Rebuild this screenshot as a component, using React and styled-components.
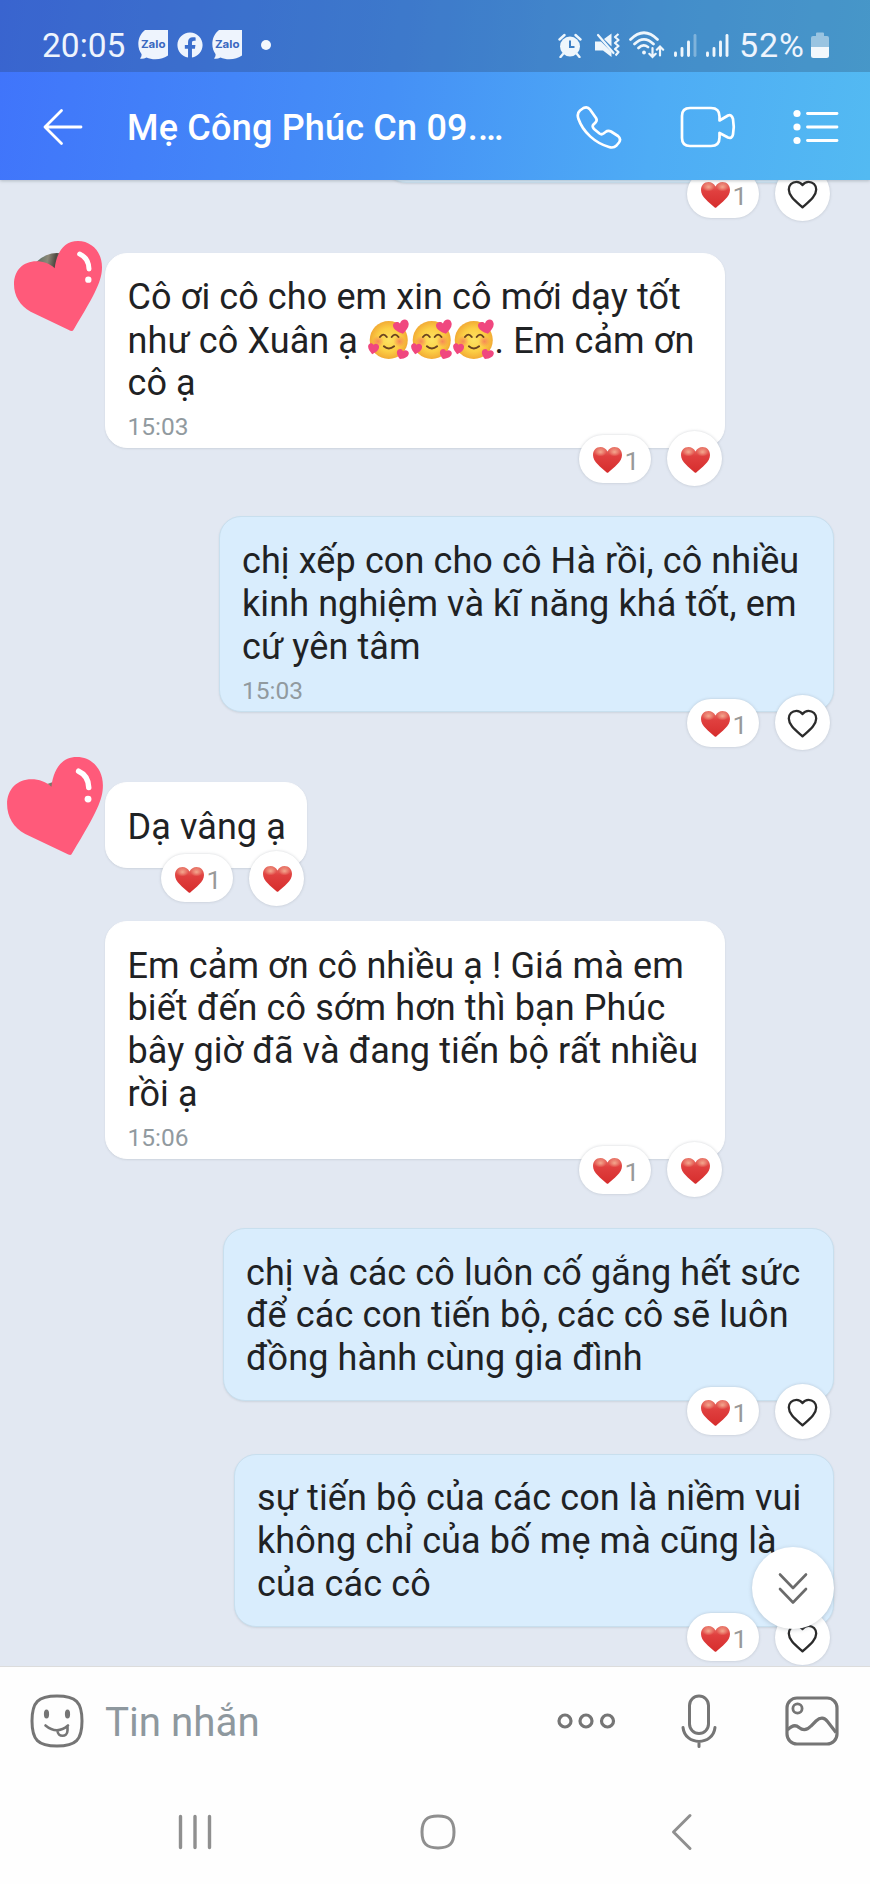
import styled, { createGlobalStyle } from 'styled-components';
import { FaFacebook } from 'react-icons/fa';

const messages = [
  { id: 1, mine: true, width: 450, lines: [] },
  {
    id: 2,
    width: 620,
    gap: 69.5,
    sticker: 'small',
    lines: ['Cô ơi cô cho em xin cô mới dạy tốt', 'như cô Xuân ạ 🥰🥰🥰. Em cảm ơn', 'cô ạ'],
    time: '15:03',
    reacted: true,
  },
  {
    id: 3,
    mine: true,
    width: 615,
    gap: 68,
    lines: ['chị xếp con cho cô Hà rồi, cô nhiều', 'kinh nghiệm và kĩ năng khá tốt, em', 'cứ yên tâm'],
    time: '15:03',
  },
  { id: 4, width: 202, gap: 69.5, sticker: 'large', lines: ['Dạ vâng ạ'], reacted: true },
  {
    id: 5,
    width: 620,
    gap: 53,
    lines: [
      'Em cảm ơn cô nhiều ạ ! Giá mà em',
      'biết đến cô sớm hơn thì bạn Phúc',
      'bây giờ đã và đang tiến bộ rất nhiều',
      'rồi ạ',
    ],
    time: '15:06',
    reacted: true,
  },
  {
    id: 6,
    mine: true,
    width: 611,
    gap: 68.5,
    lines: ['chị và các cô luôn cố gắng hết sức', 'để các con tiến bộ, các cô sẽ luôn', 'đồng hành cùng gia đình'],
  },
  {
    id: 7,
    mine: true,
    width: 600,
    gap: 53,
    lines: ['sự tiến bộ của các con là niềm vui', 'không chỉ của bố mẹ mà cũng là', 'của các cô'],
  },
];

export default function App() {
  return (
    <Screen>
      <GlobalStyle />
      <Top>
        <StatusBar />
        <Header>
          <BackIcon />
          <Title>Mẹ Công Phúc Cn 09.…</Title>
          <Actions>
            <PhoneIcon />
            <VideoIcon />
            <ListIcon />
          </Actions>
        </Header>
      </Top>
      <Chat>
        {messages.map((m) => (
          <Message key={m.id} {...m} />
        ))}
        <ScrollButton aria-label="Xuống cuối">
          <svg width="30" height="33" viewBox="0 0 30 33" fill="none" stroke="#6b6b6b" strokeWidth="2.600" strokeLinecap="round" strokeLinejoin="round">
            <path d="M2 2.500l13 13.500L28 2.500M2 17l13 13.500L28 17" />
          </svg>
        </ScrollButton>
      </Chat>
      <Composer>
        <SmileIcon />
        <Placeholder>Tin nhắn</Placeholder>
        <DotsIcon />
        <MicIcon />
        <ImageIcon />
      </Composer>
      <NavBar />
    </Screen>
  );
}

function Message({ mine, width, gap, sticker, lines, time, reacted }) {
  return (
    <Row $mine={mine} $gap={gap}>
      {!mine && (
        <AvatarSlot>
          {sticker && <Avatar />}
          {sticker && (
            <Sticker $large={sticker === 'large'} viewBox="0 0 264 270">
              <path
                fill="#ff5a7a"
                d="M174 270Q169 270 163 266L50 212C18 195 0 164 0 130C0 88 28 61 67 61C88 61 108 68 122 82C128 34 150 0 192 0C234 0 264 34 264 78C264 118 247 153 180 264Q177 270 174 270Z"
              />
              <path d="M197 39Q224 51 225 84" fill="none" stroke="#fff" strokeWidth="15" strokeLinecap="round" />
              <circle cx="223" cy="116" r="9.500" fill="#fff" />
            </Sticker>
          )}
        </AvatarSlot>
      )}
      <Bubble $mine={mine} $width={width} $bottom={time ? 6.5 : lines.length > 1 ? 20 : 18.5}>
        {lines.map((line) => (
          <Line key={line}>
            {line.split(/(🥰)/u).map((part, i) => (part === '🥰' ? <LoveFace key={i} /> : part))}
          </Line>
        ))}
        {time && <Time>{time}</Time>}
        <Reactions $mine={mine}>
          <Count>
            <RedHeart />
            <span>1</span>
          </Count>
          <LikeButton $on={reacted}>{reacted ? <RedHeart /> : <HeartOutline />}</LikeButton>
        </Reactions>
      </Bubble>
    </Row>
  );
}

function StatusBar() {
  return (
    <Status>
      <Clock>20:05</Clock>
      <ZaloIcon />
      <FaFacebook size={26} />
      <ZaloIcon />
      <Dot />
      <Spacer />
      <Indicators>
        <AlarmIcon />
        <MuteIcon />
        <WifiIcon />
        <SignalIcon weak />
        <SignalIcon />
        <Percent>52%</Percent>
        <BatteryIcon />
      </Indicators>
    </Status>
  );
}

function NavBar() {
  return (
    <Nav>
      <svg width="34" height="36" viewBox="0 0 34 36" stroke="#8f8f8f" strokeWidth="3.400" strokeLinecap="round">
        <path d="M2.500 2.500v31M17 2.500v31M31.500 2.500v31" />
      </svg>
      <HomeIcon width="36" height="36" viewBox="0 0 36 36" fill="none" stroke="#8f8f8f" strokeWidth="3">
        <path d="M18 2C29.500 2 34 6.500 34 18S29.500 34 18 34S2 29.500 2 18S6.500 2 18 2Z" />
      </HomeIcon>
      <svg width="22" height="38" viewBox="0 0 22 38" fill="none" stroke="#8f8f8f" strokeWidth="3" strokeLinecap="round" strokeLinejoin="round">
        <path d="M19 2.500L2.500 19L19 35.500" />
      </svg>
    </Nav>
  );
}

/* status icons */

const ZaloIcon = () => (
  <svg width="30" height="30" viewBox="0 0 30 30">
    <path fill="#eef4fd" d="M7 0H30V25.500C25 29.500 15 30.500 8.500 27.500Q5 29.300 2 28.500Q4 26.500 3.500 24C-1.200 18-1.200 6.500 7 0Z" />
    <text x="15.200" y="17.800" textAnchor="middle" textLength="24.500" lengthAdjust="spacingAndGlyphs" fontFamily="Inter, sans-serif" fontWeight="700" fontSize="11" fill="#3a68c0">
      Zalo
    </text>
  </svg>
);

const AlarmIcon = () => (
  <svg width="24" height="25" viewBox="0 0 24 25" fill="#eef6fc">
    <path d="M1.500 6.500L6.500 2M22.500 6.500L17.500 2M5 21L2.500 24M19 21l2.500 3" stroke="#eef6fc" strokeWidth="2.400" strokeLinecap="round" />
    <circle cx="12" cy="13.500" r="10" />
    <path d="M12 7.500v6.500h4.500" fill="none" stroke="#3d80c6" strokeWidth="2" />
  </svg>
);

const MuteIcon = () => (
  <svg width="25" height="25" viewBox="0 0 25 25" fill="#eef6fc">
    <path d="M0 8.500H6L16.500 19V24L8 17.500H0ZM9 6L16.500 .500V13.500Z" />
    <path d="M3 2L18.500 20" stroke="#eef6fc" strokeWidth="2.200" strokeLinecap="round" />
    <path d="M23.500 1l-3.500 3 3.500 3-3.500 3 3.500 3-3.500 3 3.500 3-3 3.500" fill="none" stroke="#eef6fc" strokeWidth="2.200" strokeLinejoin="round" />
  </svg>
);

const WifiIcon = () => (
  <svg width="36" height="28" viewBox="0 0 36 28" fill="none" stroke="#eef6fc" strokeWidth="2.700" strokeLinecap="round">
    <path d="M1.500 8.500Q15-5 28.500 8.500M5.500 13Q15 3.500 24.500 13M9.500 17Q14 12.500 19 16" />
    <circle cx="15" cy="21.500" r="1.900" fill="#eef6fc" stroke="none" />
    <path d="M23.500 17v8.500M20.300 22.800l3.200 3.200 3.200-3.200M31 24.500V16M27.800 18.700l3.200-3.200 3.200 3.200" strokeWidth="2.200" />
  </svg>
);

const SignalIcon = ({ weak }) => (
  <svg width="23" height="25" viewBox="0 0 23 25" stroke="#eef6fc" strokeWidth="2.900" strokeLinecap="round">
    <path d="M1.500 20v2.500M8 15.500v7M14.500 9v13.500" />
    <path d="M21 2.500v20" opacity={weak ? 0.35 : 1} />
  </svg>
);

const BatteryIcon = () => (
  <svg width="18" height="27" viewBox="0 0 18 27">
    <path d="M5 1.500Q5 .5 6 .5H12Q13 .5 13 1.500V4H16Q18 4 18 6V15H0V6Q0 4 2 4H5Z" fill="#fff" opacity=".45" />
    <path d="M0 15H18V23.500Q18 26 15.500 26H2.500Q0 26 0 23.500Z" fill="#f2f8fc" />
  </svg>
);

/* header icons */

const BackIcon = () => (
  <svg width="40" height="38" viewBox="0 0 40 38" fill="none" stroke="#fff" strokeWidth="2.800" strokeLinecap="round" strokeLinejoin="round">
    <path d="M18.500 2.500L2 19l16.500 16.500M2 19H38" />
  </svg>
);

const PhoneIcon = () => (
  <svg width="46" height="44" viewBox="0 0 46 44" fill="none" stroke="#fff" strokeWidth="2.700" strokeLinejoin="round">
    <path d="M4 5.500L7.500 3Q11.500 1 14 4.500L20 13Q21.500 15.500 19.500 17.500L17 20Q16 22 18 24L23.500 28.500Q25.500 30 27.500 28.500L29.500 27Q32 25 35 26.500L42 31Q45.500 34 43 37.500L40.500 40.500Q37.500 43.500 33 42C19 38 7 27 2.500 14Q.5 8.500 4 5.500Z" />
  </svg>
);

const VideoIcon = () => (
  <svg width="56" height="42" viewBox="0 0 56 42" fill="none" stroke="#fff" strokeWidth="2.700" strokeLinejoin="round">
    <path d="M10 2H31Q39.500 2 39.500 10.500V14.500L48 9.500Q51.500 8 53 13Q54.500 21 53 28.500Q52 33 48 31.500L39.500 27V31.500Q39.500 40 31 40H10Q2 40 2 32V10Q2 2 10 2Z" />
  </svg>
);

const ListIcon = () => (
  <svg width="46" height="36" viewBox="0 0 46 36" fill="#fff" stroke="#fff">
    {[4.5, 18, 31.5].map((y) => (
      <g key={y}>
        <circle cx="4" cy={y} r="3.600" stroke="none" />
        <path d={`M14.500 ${y}H44`} strokeWidth="2.800" strokeLinecap="round" />
      </g>
    ))}
  </svg>
);

/* chat icons */

const RedHeart = () => (
  <svg width="29" height="26" viewBox="0 0 29 26">
    <defs>
      <linearGradient id="heart" x1="0" y1="0" x2="0" y2="1">
        <stop offset="0" stopColor="#e8776a" />
        <stop offset=".35" stopColor="#e0403f" />
        <stop offset="1" stopColor="#d62d2d" />
      </linearGradient>
      <radialGradient id="shine">
        <stop offset="0" stopColor="#f7b79a" stopOpacity=".85" />
        <stop offset="1" stopColor="#f7b79a" stopOpacity="0" />
      </radialGradient>
    </defs>
    <path fill="url(#heart)" d="M14.500 4.500C16 1.500 18.500 0 21.500 0C26 0 29 3.500 29 8C29 15 21 20 15.300 25.500Q14.500 26 13.700 25.500C8 20 0 15 0 8C0 3.500 3 0 7.500 0C10.500 0 13 1.500 14.500 4.500Z" />
    <ellipse cx="7.500" cy="5" rx="6" ry="4.500" fill="url(#shine)" />
    <ellipse cx="21.500" cy="5" rx="6" ry="4.500" fill="url(#shine)" />
  </svg>
);

const HeartOutline = () => (
  <svg width="31" height="29" viewBox="0 0 31 29" fill="none" stroke="#2b2b2b" strokeWidth="2.300" strokeLinejoin="round">
    <path d="M15.500 5C17 3 19 1.800 21.500 1.800C26 1.800 29.200 5.200 29.200 9.500C29.200 16 22.500 21 15.500 27.300C8.500 21 1.800 16 1.800 9.500C1.800 5.200 5 1.800 9.500 1.800C12 1.800 14 3 15.500 5Z" />
  </svg>
);

const LoveFace = () => (
  <Emoji viewBox="0 0 42 42">
    <defs>
      <radialGradient id="face">
        <stop offset="0" stopColor="#fde262" />
        <stop offset=".6" stopColor="#fccf45" />
        <stop offset="1" stopColor="#f2ab35" />
      </radialGradient>
      <radialGradient id="cheek">
        <stop offset="0" stopColor="#f5785a" stopOpacity=".8" />
        <stop offset="1" stopColor="#f5785a" stopOpacity="0" />
      </radialGradient>
    </defs>
    <circle cx="21" cy="21.500" r="19.500" fill="url(#face)" />
    <circle cx="10" cy="23" r="6" fill="url(#cheek)" />
    <circle cx="32" cy="23" r="6" fill="url(#cheek)" />
    <path d="M12 18.500Q15.500 13.500 19 18.500M24 18.500Q27.500 13.500 31 18.500M16 28Q21 32.500 26.500 28" fill="none" stroke="#6a4320" strokeWidth="2" strokeLinecap="round" />
    <g fill="#f0477f">
      <path d="M26 4.500C29 2 31.500 3 32.500 4.500C33.500 1 37.500-.5 40 1.500C43.500 6 40 11 35.500 15C30 14 23 9 26 4.500Z" />
      <path d="M.5 26C2.500 24 4.500 25 5.500 26.500C7.500 24.500 10.500 25.500 11 28C11.500 32 8 34 4 36C1.500 33 -1.500 29 .5 26Z" />
      <path d="M30.500 31.500C33 30 35 31 35.500 33C38 31 41 32 41.500 34.500C42 38 38 40.500 32.500 41C30 38 28 34 30.500 31.500Z" />
    </g>
  </Emoji>
);

/* composer icons */

const SmileIcon = () => (
  <svg width="54" height="54" viewBox="0 0 54 54" fill="none" stroke="#757575" strokeWidth="3" strokeLinecap="round">
    <path d="M27 2C46 2 52 8 52 27S46 52 27 52S2 46 2 27S8 2 27 2Z" />
    <ellipse cx="16.500" cy="20" rx="2.600" ry="4.600" fill="#757575" stroke="none" />
    <ellipse cx="37.500" cy="20" rx="2.600" ry="4.600" fill="#757575" stroke="none" />
    <path d="M15.500 31.500Q27 41 38 31.500M27.500 36.500C27.500 43.500 37.500 43.500 37.500 36.500V32.500" strokeWidth="2.600" />
  </svg>
);

const DotsIcon = () => (
  <svg width="60" height="18" viewBox="0 0 60 18" fill="none" stroke="#757575" strokeWidth="3.200">
    <circle cx="9" cy="9" r="6" />
    <circle cx="30" cy="9" r="6" />
    <circle cx="51.500" cy="9" r="6" />
  </svg>
);

const MicIcon = () => (
  <svg width="36" height="54" viewBox="0 0 36 54" fill="none" stroke="#757575" strokeWidth="3" strokeLinecap="round">
    <rect x="8.500" y="2" width="19" height="37.500" rx="9.500" />
    <path d="M2 33.500C4 52 32 52 34 33.500M18 48v4.500" />
  </svg>
);

const ImageIcon = () => (
  <svg width="54" height="50" viewBox="0 0 54 50" fill="none" stroke="#757575" strokeWidth="3.200">
    <rect x="2" y="2" width="50" height="46" rx="10" />
    <circle cx="12.500" cy="12.500" r="4.600" strokeWidth="2.800" />
    <path d="M2.500 34Q9 27 14 31.500Q20 36.500 26 30L31 25Q37.500 19 42.500 25.500L51 36.500" />
  </svg>
);

const GlobalStyle = createGlobalStyle`
  * {
    box-sizing: border-box;
  }
  body {
    margin: 0;
    font-family: Roboto, "Noto Sans", sans-serif;
    background-color: #fefefe;
  }
  svg {
    display: block;
    flex-shrink: 0;
  }
`;

const Screen = styled.div`
  width: 870px;
  height: 1884px;
  display: flex;
  flex-direction: column;
  overflow: hidden;
`;

const Top = styled.div`
  height: 180px;
  flex-shrink: 0;
  color: #fff;
  background: linear-gradient(98deg, #4074fb 0%, #4590f6 45%, #4eacf5 75%, #53baf2 100%);
  box-shadow: 0 1px 3px rgba(90, 100, 110, 0.35);
  z-index: 1;
`;

const Status = styled.div`
  height: 72px;
  padding: 18px 41px 0 42px;
  display: flex;
  align-items: center;
  background-color: rgba(40, 60, 90, 0.27);
  color: #eef4fd;

  svg + svg {
    margin-left: 9px;
  }
`;

const Clock = styled.span`
  width: 96px;
  font-size: 33.5px;
`;

const Dot = styled.span`
  width: 10px;
  height: 10px;
  margin-left: 19px;
  border-radius: 50%;
  background-color: #f4f8fd;
`;

const Spacer = styled.div`
  flex: 1;
`;

const Indicators = styled.div`
  display: flex;
  align-items: center;

  svg + svg {
    margin-left: 9px;
  }
  svg:first-child {
    margin-right: 4px;
  }
`;

const Percent = styled.span`
  width: 68px;
  margin: 0 4px 0 10px;
  font-size: 34px;
  letter-spacing: 0.9px;
  white-space: nowrap;
`;

const Header = styled.header`
  height: 108px;
  padding: 2px 31px 0 43px;
  display: flex;
  align-items: center;
`;

const Title = styled.h1`
  flex: 1;
  margin: 0 0 0 44px;
  padding-top: 1px;
  font-size: 36px;
  font-weight: 500;
  letter-spacing: 0.2px;
  white-space: nowrap;
`;

const Actions = styled.div`
  display: flex;
  align-items: center;
  gap: 57.5px;
`;

const Chat = styled.main`
  position: relative;
  height: 1486px;
  padding-bottom: 39.5px;
  display: flex;
  flex-direction: column;
  justify-content: flex-end;
  flex-shrink: 0;
  overflow: hidden;
  background-color: #e2e8f2;
`;

const Row = styled.div`
  display: flex;
  flex-shrink: 0;
  justify-content: ${({ $mine }) => ($mine ? 'flex-end' : 'flex-start')};
  margin-top: ${({ $gap }) => $gap || 0}px;
  padding: 0 36px 0 22px;
`;

const AvatarSlot = styled.div`
  position: relative;
  width: 83px;
`;

const Avatar = styled.div`
  width: 56px;
  height: 56px;
  margin-left: 7px;
  border-radius: 50%;
  background: linear-gradient(100deg, #5d7468 15%, #8d8878 30%, #4f4a42 42%, #8a8f90 55%);
`;

// pinned over the avatar, so it sticks out on the left and on top
const Sticker = styled.svg`
  position: absolute;
  width: ${({ $large }) => ($large ? 96 : 88)}px;
  height: ${({ $large }) => ($large ? 98 : 90)}px;
  top: ${({ $large }) => ($large ? -25 : -12)}px;
  left: ${({ $large }) => ($large ? -15 : -8)}px;
`;

const Bubble = styled.div`
  position: relative;
  width: ${({ $width }) => $width}px;
  min-height: 86px;
  padding: 22.8px 21px ${({ $bottom }) => $bottom}px ${({ $mine }) => ($mine ? 22 : 21.5)}px;
  border: 1px solid ${({ $mine }) => ($mine ? '#c8dfee' : '#fff')};
  border-radius: 22px;
  background-color: ${({ $mine }) => ($mine ? '#d9edfd' : '#fff')};
  box-shadow: 0 1px 2px rgba(120, 130, 140, 0.2);
`;

const Line = styled.div`
  height: 42.7px;
  font-size: 36px;
  line-height: 42.7px;
  letter-spacing: 0.1px;
  color: #1f2224;
  white-space: pre;
`;

const Emoji = styled.svg`
  display: inline-block;
  width: 41.5px;
  height: 41px;
  margin: 0 0 0 1px;
  vertical-align: -7px;
`;

const Time = styled.div`
  margin-top: 8.5px;
  font-size: 24.5px;
  line-height: 28px;
  color: #919a9f;
`;

const Reactions = styled.div`
  position: absolute;
  right: ${({ $mine }) => ($mine ? 3 : 2)}px;
  bottom: -39px;
  display: flex;
  align-items: center;
  gap: 16px;
`;

const Count = styled.div`
  width: 72px;
  height: 48px;
  padding: 3px 0 0 14px;
  display: flex;
  align-items: center;
  gap: 2.5px;
  border-radius: 24px;
  background-color: #fff;
  box-shadow: 0 0 3px rgba(100, 110, 120, 0.3);
  font-size: 26.5px;
  color: #999;
`;

const LikeButton = styled.div`
  width: 55px;
  height: 55px;
  padding: 2px 0 0 ${({ $on }) => ($on ? 1 : 0)}px;
  display: flex;
  align-items: center;
  justify-content: center;
  border-radius: 50%;
  background-color: #fff;
  box-shadow: 0 0 3px rgba(100, 110, 120, 0.3);
`;

const ScrollButton = styled.button`
  position: absolute;
  right: 36px;
  bottom: 37px;
  width: 82px;
  height: 82px;
  padding: 0;
  display: flex;
  align-items: center;
  justify-content: center;
  border: none;
  border-radius: 50%;
  background-color: #fff;
  box-shadow: 0 1px 4px rgba(100, 110, 120, 0.3);
`;

const Composer = styled.footer`
  height: 109px;
  flex-shrink: 0;
  padding: 0 31px 0 30px;
  display: flex;
  align-items: center;
  border-top: 1px solid #dcdcdc;
  background-color: #fefefe;

  svg + svg {
    margin-left: 65px;
  }
  svg:last-child {
    margin-left: 68px;
  }
`;

const Placeholder = styled.span`
  flex: 1;
  margin-left: 21px;
  padding-top: 3px;
  font-size: 40.3px;
  color: #8e989e;
`;

const Nav = styled.nav`
  flex: 1;
  padding: 5px 177px 0 178px;
  display: flex;
  align-items: center;
  justify-content: space-between;
`;

const HomeIcon = styled.svg`
  margin-right: 8px;
`;
